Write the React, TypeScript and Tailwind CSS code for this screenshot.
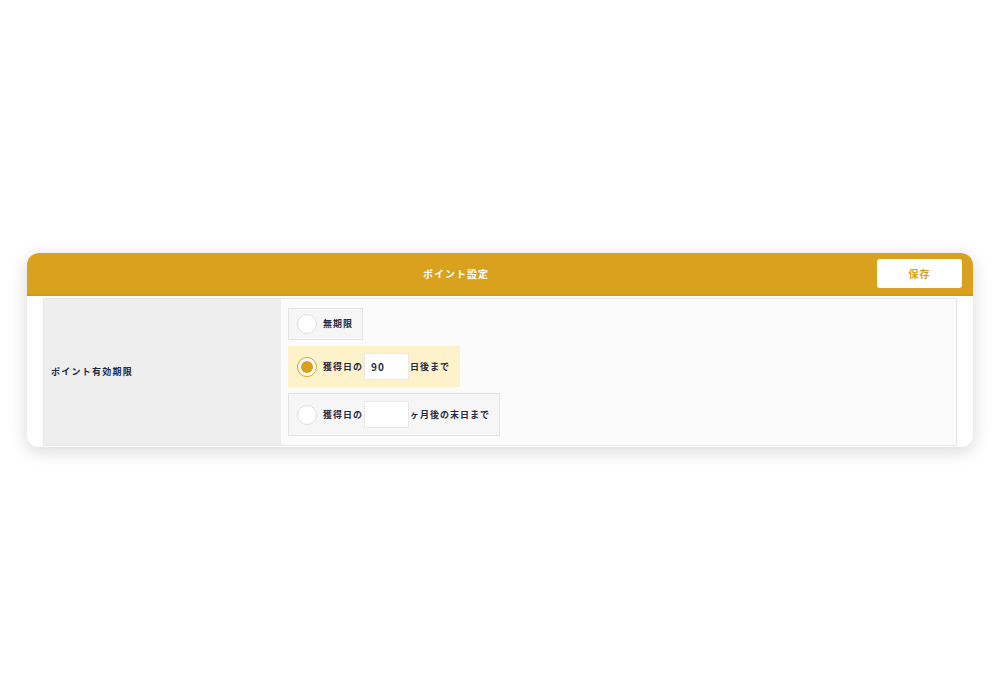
import { useState } from 'react';

const font = { fontFamily: '"Noto Sans CJK JP", "Noto Sans", sans-serif' };

type Opt = 'none' | 'days' | 'months';

function Radio({ checked }: { checked: boolean }) {
  return checked ? (
    <span className="flex h-[20px] w-[20px] shrink-0 items-center justify-center rounded-full border-[1.5px] border-[#d9a11e] bg-white">
      <span className="h-[12px] w-[12px] rounded-full bg-[#d9a11e]" />
    </span>
  ) : (
    <span className="h-[20px] w-[20px] shrink-0 rounded-full border border-[#dedede] bg-white" />
  );
}

export default function App() {
  const [opt, setOpt] = useState<Opt>('days');
  const [days, setDays] = useState('90');
  const [months, setMonths] = useState('');

  const box = (active: boolean) =>
    active
      ? 'flex items-center self-start border border-[#fdf2c9] bg-[#fdf2c9] pl-[8px] pr-[9px] cursor-pointer'
      : 'flex items-center self-start border border-[#e3e3e3] bg-[#f6f6f6] pl-[8px] pr-[9px] cursor-pointer';

  const inputCls =
    'mx-[1px] h-[27px] w-[45px] border border-[#e8e8e8] bg-white px-[6px] text-[10px] font-bold text-[#1f2a44] outline-none';

  return (
    <div className="flex min-h-screen items-center justify-center bg-white px-[27px]" style={font}>
      <div className="w-full overflow-hidden rounded-[12px] bg-white shadow-[0_4px_18px_rgba(0,0,0,0.16)]">
        <div className="flex h-[43px] items-center gap-2 border-b-2 border-[#d49a0f] bg-[#d9a11e] pl-4 pr-[11px]">
          <div className="flex-1 text-center text-[10px] font-bold tracking-[1px] text-white">ポイント設定</div>
          <button className="h-[29px] w-[85px] rounded-[3px] bg-white text-[10px] font-bold tracking-[1px] text-[#d9a11e]">保存</button>
        </div>
        <div className="px-4 pb-[1px] pt-[2px]">
          <div className="flex border border-[#e6e6e6]">
            <div className="flex w-[237px] shrink-0 items-center bg-[#eeeeee] px-[7px] text-[9px] font-bold tracking-[1.25px] text-[#1f2a44]">
              ポイント有効期限
            </div>
            <div className="flex flex-1 flex-col gap-[6px] bg-[#fbfbfb] px-[7px] pb-[9px] pt-[9px] text-[9px] font-bold tracking-[1px] text-[#1f2a44]">
              <label className={`${box(opt === 'none')} py-[5px]`} onClick={() => setOpt('none')}>
                <Radio checked={opt === 'none'} />
                <span className="ml-[6px]">無期限</span>
              </label>
              <label className={`${box(opt === 'days')} py-[6px]`} onClick={() => setOpt('days')}>
                <Radio checked={opt === 'days'} />
                <span className="ml-[6px]">獲得日の</span>
                <input value={days} onChange={(e) => setDays(e.target.value)} className={inputCls} />
                <span>日後まで</span>
              </label>
              <label className={`${box(opt === 'months')} py-[7px]`} onClick={() => setOpt('months')}>
                <Radio checked={opt === 'months'} />
                <span className="ml-[6px]">獲得日の</span>
                <input value={months} onChange={(e) => setMonths(e.target.value)} className={inputCls} />
                <span>ヶ月後の末日まで</span>
              </label>
            </div>
          </div>
        </div>
      </div>
    </div>
  );
}
